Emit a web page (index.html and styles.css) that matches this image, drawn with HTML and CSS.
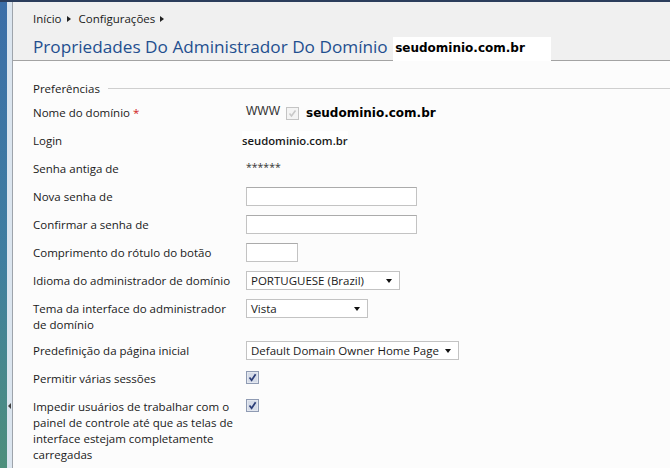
FILE: index.html
```html
<!DOCTYPE html>
<html lang="pt-BR">
<head>
    <meta charset="UTF-8">
    <title>Propriedades Do Administrador Do Domínio</title>
    <link rel="stylesheet" href="styles.css">
</head>
<body>
    <div class="topbar"></div>
    <div class="shell">
        <div class="sidebar"></div>
        <div class="splitter"><span class="grip"></span></div>
        <div class="main">
            <div class="header">
                <div class="crumbs">
                    <span>Início</span><span class="tri"></span>
                    <span>Configurações</span><span class="tri"></span>
                </div>
                <h1 class="title">Propriedades Do Administrador Do Domínio <span class="mask">seudominio.com.br</span></h1>
            </div>
            <div class="content">
                <div class="legend">
                    <span>Preferências</span>
                    <span class="legend-line"></span>
                </div>

                <div class="row">
                    <div class="label">Nome do domínio <span class="req">*</span></div>
                    <div class="value inline">
                        <span class="www">WWW</span>
                        <svg class="check off" width="13" height="13" viewBox="0 0 13 13">
                            <rect x="0.5" y="0.5" width="12" height="12" fill="#f4f4f4" stroke="#c4c4c4"/>
                            <path d="M3.5 6.5 L5.5 9 L9.5 3.5" fill="none" stroke="#c8c8c8" stroke-width="1.6"/>
                        </svg>
                        <span class="domain">seudominio.com.br</span>
                    </div>
                </div>
                <div class="row">
                    <div class="label">Login</div>
                    <div class="value"><span class="login">seudominio.com.br</span></div>
                </div>
                <div class="row">
                    <div class="label">Senha antiga de</div>
                    <div class="value"><span class="stars">******</span></div>
                </div>
                <div class="row">
                    <div class="label">Nova senha de</div>
                    <div class="value"><input type="password" class="field wide"></div>
                </div>
                <div class="row">
                    <div class="label">Confirmar a senha de</div>
                    <div class="value"><input type="password" class="field wide"></div>
                </div>
                <div class="row">
                    <div class="label">Comprimento do rótulo do botão</div>
                    <div class="value"><input type="text" class="field short"></div>
                </div>
                <div class="row">
                    <div class="label">Idioma do administrador de domínio</div>
                    <div class="value"><div class="select lang">PORTUGUESE (Brazil)<span class="arrow"></span></div></div>
                </div>
                <div class="row">
                    <div class="label">Tema da interface do administrador de domínio</div>
                    <div class="value"><div class="select theme">Vista<span class="arrow"></span></div></div>
                </div>
                <div class="row">
                    <div class="label">Predefinição da página inicial</div>
                    <div class="value"><div class="select home">Default Domain Owner Home Page<span class="arrow"></span></div></div>
                </div>
                <div class="row">
                    <div class="label">Permitir várias sessões</div>
                    <div class="value">
                        <svg class="check" width="13" height="13" viewBox="0 0 13 13">
                            <rect x="0.5" y="0.5" width="12" height="12" fill="#e4e8f0" stroke="#8f9bb3"/>
                            <rect x="2" y="2" width="9" height="9" fill="#d6dce8"/>
                            <path d="M3.5 6.5 L5.6 9.2 L9.6 3.2" fill="none" stroke="#2c3e78" stroke-width="1.7"/>
                        </svg>
                    </div>
                </div>
                <div class="row">
                    <div class="label">Impedir usuários de trabalhar com o painel de controle até que as telas de interface estejam completamente carregadas</div>
                    <div class="value">
                        <svg class="check" width="13" height="13" viewBox="0 0 13 13">
                            <rect x="0.5" y="0.5" width="12" height="12" fill="#e4e8f0" stroke="#8f9bb3"/>
                            <rect x="2" y="2" width="9" height="9" fill="#d6dce8"/>
                            <path d="M3.5 6.5 L5.6 9.2 L9.6 3.2" fill="none" stroke="#2c3e78" stroke-width="1.7"/>
                        </svg>
                    </div>
                </div>
            </div>
        </div>
    </div>
</body>
</html>
```

FILE: styles.css
```css
html, body {
    margin: 0;
    padding: 0;
    height: 100%;
    overflow: hidden;
}
body {
    font-family: "Open Sans", "Noto Sans", sans-serif;
    font-size: 11.5px;
    color: #1a1a1a;
    background: #fcfcfc;
}
.topbar {
    height: 2px;
    background: #2b3d5c;
}
.shell {
    display: flex;
    height: calc(100% - 2px);
}
.sidebar {
    width: 7px;
    background: linear-gradient(#3b6ea8, #3f7ea0 55%, #4d8f7c);
}
.splitter {
    width: 5px;
    background: #dbe5ef;
    border-right: 1px solid #9ea4ab;
    display: flex;
    align-items: flex-end;
    padding-bottom: 59px;
}
.grip {
    width: 0;
    height: 0;
    margin-left: 1px;
    border-top: 3px solid transparent;
    border-bottom: 3px solid transparent;
    border-right: 3px solid #404040;
}
.main {
    flex: 1;
    display: flex;
    flex-direction: column;
}
.header {
    background: #f0f0f0;
    border-bottom: 1px solid #a3a3a3;
    padding-left: 20px;
    box-sizing: border-box;
    height: 59px;
}
.crumbs {
    display: flex;
    align-items: center;
    gap: 5px;
    padding-top: 8px;
    height: 18px;
    line-height: 18px;
}
.tri {
    width: 0;
    height: 0;
    border-top: 3.5px solid transparent;
    border-bottom: 3.5px solid transparent;
    border-left: 4px solid #222;
    margin-right: 3px;
}
.title {
    margin: 6px 0 0;
    font-weight: normal;
    font-size: 17.2px;
    line-height: 26px;
    color: #1f4f8f;
    white-space: nowrap;
}
.mask {
    font-family: "DejaVu Sans", sans-serif;
    font-weight: bold;
    font-size: 12px;
    color: #000;
    background: #fff;
    padding: 4px 26px 6px 2px;
    margin-left: 1px;
    position: relative;
    top: -1px;
}
.content {
    padding: 19px 0 0 20px;
}
.legend {
    display: flex;
    align-items: center;
    gap: 8px;
    height: 16px;
    margin-bottom: 7px;
}
.legend-line {
    flex: 1;
    border-top: 1px solid #cfcfcf;
}
.row {
    display: grid;
    grid-template-columns: 213px 1fr;
    margin-bottom: 9px;
    min-height: 19px;
}
.label {
    line-height: 15.7px;
    padding-top: 2px;
    padding-right: 13px;
}
.req {
    color: #d02020;
}
.value {
    display: flex;
    align-items: flex-start;
    min-height: 19px;
}
.inline {
    align-items: center;
}
.www {
    font-family: "Liberation Sans", sans-serif;
    font-size: 12px;
    color: #333;
    margin-right: 6px;
    position: relative;
    top: -2px;
}
.check {
    display: block;
}
.value > .check {
    margin-top: 2px;
}
.domain {
    font-family: "DejaVu Sans", sans-serif;
    font-weight: bold;
    font-size: 12px;
    color: #000;
    margin-left: 7px;
}
.login {
    font-weight: 600;
    font-size: 11.3px;
    background: #fff;
    margin-left: -4px;
    line-height: 19px;
}
.stars {
    font-size: 10.5px;
    line-height: 16px;
    color: #333;
}
.field {
    box-sizing: border-box;
    height: 19px;
    border: 1px solid #c3c3c3;
    border-top-color: #ababab;
    background: #fff;
    margin: 0;
    padding: 0 3px;
}
.wide {
    width: 171px;
}
.short {
    width: 52px;
}
.select {
    box-sizing: border-box;
    height: 19px;
    border: 1px solid #c3c3c3;
    background: #fff;
    display: flex;
    align-items: center;
    justify-content: space-between;
    padding: 0 7px 0 4px;
    white-space: nowrap;
}
.arrow {
    width: 0;
    height: 0;
    border-left: 3.5px solid transparent;
    border-right: 3.5px solid transparent;
    border-top: 4px solid #111;
}
.lang {
    width: 154px;
}
.theme {
    width: 122px;
}
.home {
    width: 213px;
    gap: 6px;
}
```
